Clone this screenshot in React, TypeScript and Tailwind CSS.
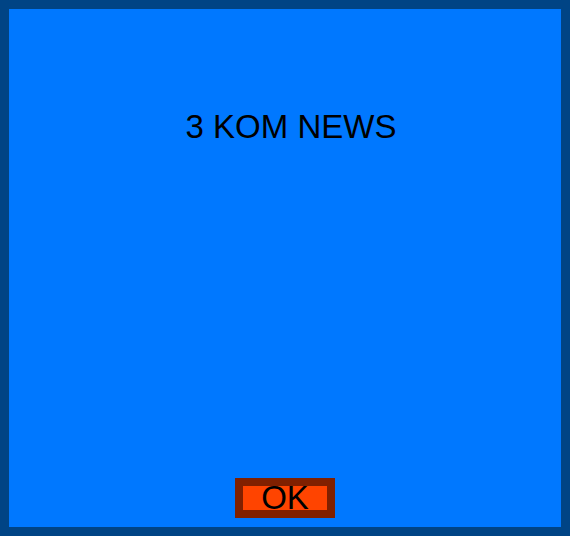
const App = () => {
  return (
    <div className="h-[536px] w-[570px] border-[9px] border-[#004485] bg-[#0078ff] font-['Liberation_Sans',Arial,sans-serif] text-black">
      <div className="flex h-full flex-col items-center">
        <h1 className="mt-[99px] pl-3 text-[33px] leading-[38px]">3 KOM NEWS</h1>
        <div className="flex-1" />
        <button className="mb-[9px] flex h-10 w-[100px] items-center justify-center border-8 border-[#802000] bg-[#ff4400] text-[33px] leading-6">
          OK
        </button>
      </div>
    </div>
  )
}

export default App
